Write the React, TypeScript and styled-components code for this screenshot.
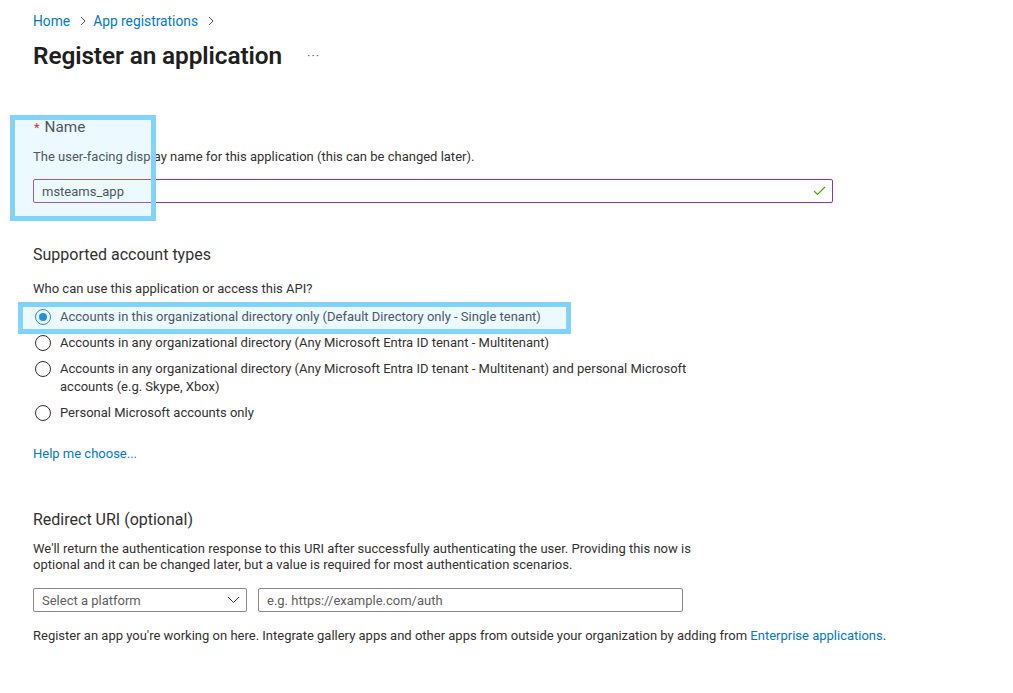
import React from "react";
import styled, { createGlobalStyle } from "styled-components";

const Global = createGlobalStyle`
  * { box-sizing: border-box; }
  body {
    margin: 0;
    background: #ffffff;
    font-family: "Segoe UI", Roboto, "Liberation Sans", sans-serif;
    color: #323130;
    font-size: 13px;
  }
`;

const Page = styled.div`
  position: relative;
  width: 1013px;
  height: 693px;
  overflow: hidden;
  padding: 12px 0 0 33px;
`;

const Breadcrumb = styled.nav`
  display: flex;
  align-items: center;
  height: 18px;
  line-height: 18px;
  font-size: 13.8px;
`;

const Crumb = styled.a`
  color: #0078d4;
  text-decoration: none;
`;

const CrumbSep = styled.span`
  display: inline-flex;
  align-items: center;
  margin: 0 7px 0 10px;
  color: #605e5c;
`;

const TitleRow = styled.div`
  display: flex;
  align-items: center;
  margin-top: 10px;
  height: 32px;
`;

const Title = styled.h1`
  margin: 0;
  font-size: 24.4px;
  font-weight: 600;
  line-height: 32px;
  color: #201f1e;
  letter-spacing: -0.1px;
`;

const More = styled.span`
  margin-left: 25px;
  color: #605e5c;
  font-size: 13px;
  letter-spacing: 1px;
  line-height: 32px;
`;

const FieldLabel = styled.div`
  margin-top: 45px;
  font-size: 15.3px;
  line-height: 20px;
  display: flex;
  align-items: baseline;
`;

const Req = styled.span`
  color: #e50000;
  font-size: 13px;
  margin-right: 5px;
  margin-left: 1px;
`;

const Desc = styled.p<{ mt: number }>`
  margin: ${(p) => p.mt}px 0 0;
  font-size: 13px;
  line-height: 18px;
`;

const NameInput = styled.div`
  margin-top: 13px;
  width: 800px;
  height: 24px;
  border: 1px solid #8c34b6;
  border-radius: 2px;
  display: flex;
  align-items: center;
  justify-content: space-between;
  padding: 0 6px 0 8px;
  font-size: 13px;
`;

const SectionTitle = styled.h2<{ mt: number }>`
  margin: ${(p) => p.mt}px 0 0;
  font-size: 16px;
  font-weight: 400;
  line-height: 22px;
`;

const RadioList = styled.div`
  margin-top: 10px;
  display: flex;
  flex-direction: column;
  gap: 8px;
  width: 670px;
`;

const RadioRow = styled.label`
  display: flex;
  align-items: flex-start;
  gap: 9px;
  line-height: 18px;
  font-size: 13px;
`;

const RadioCircle = styled.span<{ checked?: boolean }>`
  flex: none;
  width: 16px;
  height: 16px;
  margin: 1px 0 0 2px;
  border-radius: 50%;
  border: 1px solid ${(p) => (p.checked ? "#0078d4" : "#323130")};
  display: flex;
  align-items: center;
  justify-content: center;
  &::after {
    content: "";
    display: ${(p) => (p.checked ? "block" : "none")};
    width: 8px;
    height: 8px;
    border-radius: 50%;
    background: #0078d4;
  }
`;

const HelpLink = styled.a`
  display: block;
  margin-top: 23px;
  color: #0078d4;
  line-height: 18px;
  text-decoration: none;
`;

const Para = styled.p<{ mt: number; lh: number }>`
  margin: ${(p) => p.mt}px 0 0;
  width: 670px;
  line-height: ${(p) => p.lh}px;
  font-size: 13px;
`;

const UriRow = styled.div`
  margin-top: 15px;
  display: flex;
  gap: 11px;
  height: 24px;
`;

const Select = styled.div`
  width: 214px;
  height: 24px;
  border: 1px solid #8a8886;
  border-radius: 2px;
  display: flex;
  align-items: center;
  justify-content: space-between;
  padding: 0 6px 0 8px;
  color: #605e5c;
`;

const TextInput = styled.div`
  width: 425px;
  height: 24px;
  border: 1px solid #8a8886;
  border-radius: 2px;
  display: flex;
  align-items: center;
  padding: 0 8px;
  color: #605e5c;
`;

const Footer = styled.p`
  margin: 15px 0 0;
  line-height: 18px;
  font-size: 13px;
`;

const Link = styled.a`
  color: #0078d4;
  text-decoration: none;
`;

const Highlight = styled.div<{ x: number; y: number; w: number; h: number }>`
  position: absolute;
  left: ${(p) => p.x}px;
  top: ${(p) => p.y}px;
  width: ${(p) => p.w}px;
  height: ${(p) => p.h}px;
  border: 5px solid #80d4fb;
  background: rgba(170, 226, 250, 0.22);
  pointer-events: none;
`;

const Chevron = () => (
  <svg width="6" height="10" viewBox="0 0 6 10" fill="none">
    <path d="M1 1l4 4-4 4" stroke="#605e5c" strokeWidth="1" />
  </svg>
);

export default function App() {
  return (
    <Page>
      <Global />
      <Breadcrumb>
        <Crumb>Home</Crumb>
        <CrumbSep>
          <Chevron />
        </CrumbSep>
        <Crumb>App registrations</Crumb>
        <CrumbSep>
          <Chevron />
        </CrumbSep>
      </Breadcrumb>
      <TitleRow>
        <Title>Register an application</Title>
        <More>···</More>
      </TitleRow>

      <FieldLabel>
        <Req>*</Req>Name
      </FieldLabel>
      <Desc mt={10}>The user-facing display name for this application (this can be changed later).</Desc>
      <NameInput>
        <span>msteams_app</span>
        <svg width="13" height="10" viewBox="0 0 13 10" fill="none">
          <path d="M1 5l3.5 3.5L12 1" stroke="#57a300" strokeWidth="1.2" />
        </svg>
      </NameInput>

      <SectionTitle mt={41}>Supported account types</SectionTitle>
      <Desc mt={14}>Who can use this application or access this API?</Desc>
      <RadioList>
        <RadioRow>
          <RadioCircle checked />
          <span>Accounts in this organizational directory only (Default Directory only - Single tenant)</span>
        </RadioRow>
        <RadioRow>
          <RadioCircle />
          <span>Accounts in any organizational directory (Any Microsoft Entra ID tenant - Multitenant)</span>
        </RadioRow>
        <RadioRow>
          <RadioCircle />
          <span>
            Accounts in any organizational directory (Any Microsoft Entra ID tenant - Multitenant) and personal Microsoft
            accounts (e.g. Skype, Xbox)
          </span>
        </RadioRow>
        <RadioRow>
          <RadioCircle />
          <span>Personal Microsoft accounts only</span>
        </RadioRow>
      </RadioList>
      <HelpLink>Help me choose...</HelpLink>

      <SectionTitle mt={46}>Redirect URI (optional)</SectionTitle>
      <Para mt={10} lh={16}>
        We'll return the authentication response to this URI after successfully authenticating the user. Providing this now is
        optional and it can be changed later, but a value is required for most authentication scenarios.
      </Para>
      <UriRow>
        <Select>
          <span>Select a platform</span>
          <svg width="13" height="8" viewBox="0 0 13 8" fill="none">
            <path d="M1 1l5.5 5.5L12 1" stroke="#323130" strokeWidth="1" />
          </svg>
        </Select>
        <TextInput>e.g. https://example.com/auth</TextInput>
      </UriRow>
      <Footer>
        Register an app you're working on here. Integrate gallery apps and other apps from outside your organization by adding
        from <Link>Enterprise applications</Link>.
      </Footer>

      <Highlight x={10} y={115} w={146} h={106} />
      <Highlight x={18} y={302} w={553} h={32} />
    </Page>
  );
}
